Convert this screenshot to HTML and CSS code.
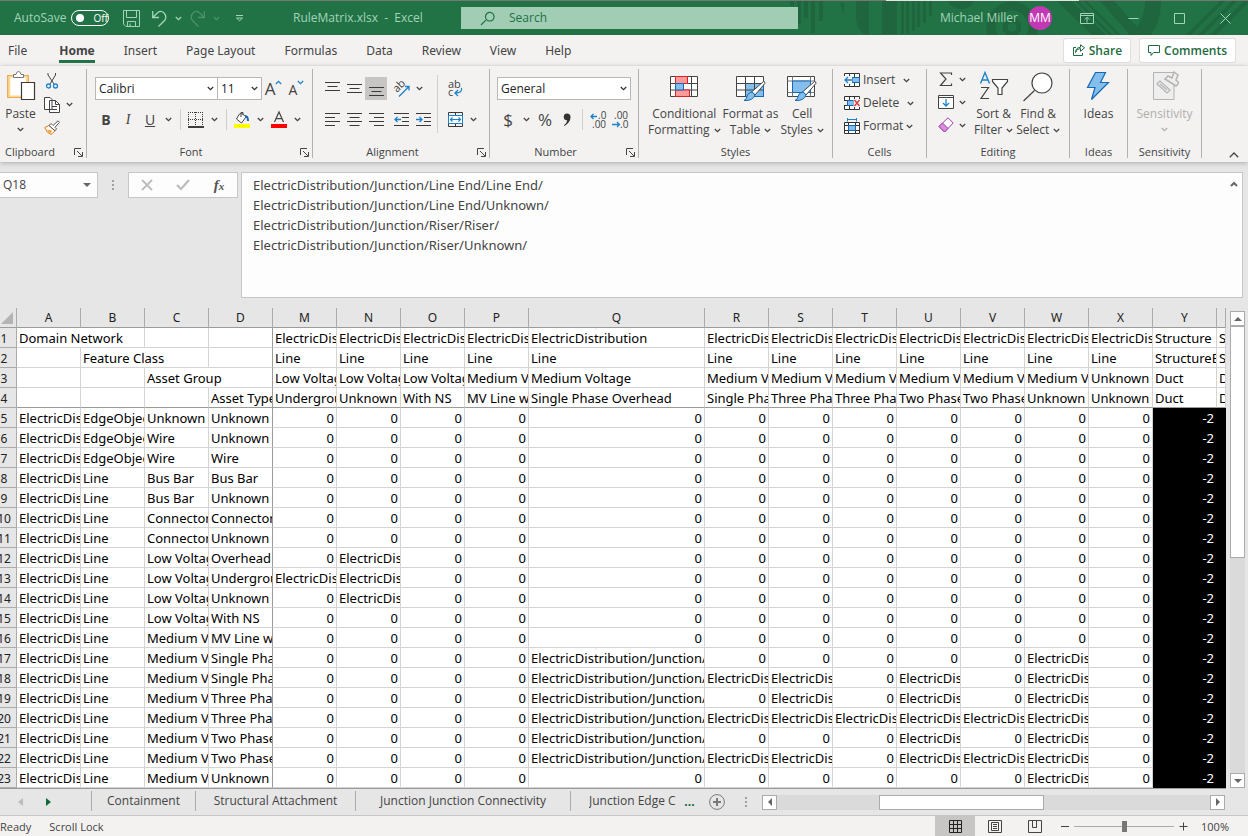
FILE: index.html
```html
<!DOCTYPE html>
<html lang="en">
<head>
<meta charset="utf-8">
<title>RuleMatrix.xlsx - Excel</title>
<link rel="stylesheet" href="styles.css">
<script src="grid.js" defer></script>
</head>
<body>
<svg class="defs" aria-hidden="true">
  <symbol id="chev" viewBox="0 0 7 5"><path d="M.8 1 3.500 3.600 6.200 1" fill="none" stroke="currentColor" stroke-width="1.300"/></symbol>
  <symbol id="launch" viewBox="0 0 9 9"><path d="M.5 7V.5H7M3 3l5 5M8.500 4v4.500H4" fill="none" stroke="currentColor"/></symbol>
</svg>

<header class="titlebar">
  <svg class="art" width="458" height="35" viewBox="790 0 458 35" aria-hidden="true">
    <g fill="#1f653e">
      <path d="M790 1h4v5h-4zM797 1h4v23h-4zM804 1h4v17h-4zM811 1h4v32h-4zM819 1h4v20h-4z"/>
      <path d="M840 3h4v12zM856 1h13v33h-5q-8-6-8-18zM882 1h15v33h-15zM901 1h3v33h-3zM906 1h3v33h-3zM912 1h3v30h-3zM917 1h3v26h-3zM923 1h3v22h-3zM929 1h3v15h-3zM948 1h26q-3 8-13 8t-13-8zM1057 1h14l35 34h-14zM1075 1h4l34 34h-4zM1083 1h4l34 34h-4zM1100 1h14l30 34h-14zM1145 1h16q0 20-10 34h-24q18-10 18-34zM1186 35l34-34h5l-34 34zM1198 35l34-34h5l-34 34zM1210 35l34-34h4v2l-32 32z"/>
    </g>
    <g fill="none" stroke="#1f653e"><circle cx="1012" cy="27" r="21" stroke-width="9"/><circle cx="1012" cy="27" r="7" stroke-width="5"/></g>
    <path d="M790 0h458v1H790z" fill="#767876"/><path d="M886 0h193v1H886z" fill="#e4e4e4"/>
  </svg>
  <div class="quick">
    <label class="autosave">AutoSave <input type="checkbox" class="switch"><span class="knob">Off</span></label>
    <button class="tb save" aria-label="Save"><svg width="17" height="17" viewBox="0 0 17 17"><path d="M.5.5h16v16H3L.5 14zM3.500.500v7h10v-7M4.500 16.500v-5h8v5M7 16.500v-3" /></svg></button>
    <button class="tb undo" aria-label="Undo"><svg width="15" height="17" viewBox="0 0 15 17"><path d="M.7 1v6.500H7M1 7.200 5.500 2.700Q9 0 12 3t1 7L6.500 16.500"/></svg></button>
    <button class="tb chevron" aria-label="Undo list"><svg width="7" height="5"><use href="#chev"/></svg></button>
    <button class="tb redo dim" aria-label="Redo"><svg width="15" height="17" viewBox="0 0 15 17"><path d="M14.300 1v6.500H8M14 7.200 9.500 2.700Q6 0 3 3t-1 7L8.500 16.500"/></svg></button>
    <button class="tb chevron dim" aria-label="Redo list"><svg width="7" height="5"><use href="#chev"/></svg></button>
    <button class="tb custom" aria-label="Customize toolbar"><svg width="9" height="7" viewBox="0 0 9 7"><path d="M1 .5h7M1.500 3 4.500 5.800 7.500 3z"/></svg></button>
  </div>
  <div class="doc">RuleMatrix.xlsx&nbsp; -&nbsp; Excel</div>
  <label class="search">
    <svg width="15" height="15" viewBox="0 0 15 15"><path d="M5.800 9.200 1 14M5.500 5.500a4.300 4.300 0 1 1 4 4.500 4.300 4.300 0 0 1-4-4.500z"/></svg>
    <input type="search" placeholder="Search" aria-label="Search">
  </label>
  <div class="account"><span>Michael Miller</span><button class="avatar">MM</button></div>
  <div class="window">
    <button class="tb" aria-label="Ribbon display options"><svg width="14" height="11" viewBox="0 0 14 11"><path d="M.5.5h13v10H.5zM.5 2.500h13M7 9.500v-5M4.800 6.500 7 4.300l2.200 2.200"/></svg></button>
    <button class="tb" aria-label="Minimize"><svg width="11" height="11" viewBox="0 0 11 11"><path d="M.5 5.500h10"/></svg></button>
    <button class="tb" aria-label="Maximize"><svg width="11" height="11" viewBox="0 0 11 11"><path d="M.5.5h10v10H.5z"/></svg></button>
    <button class="tb" aria-label="Close"><svg width="11" height="11" viewBox="0 0 11 11"><path d="m.5.5 10 10m0-10-10 10"/></svg></button>
  </div>
</header>

<nav class="tabs">
  <a href="#">File</a><a href="#" class="active">Home</a><a href="#">Insert</a><a href="#">Page Layout</a><a href="#">Formulas</a><a href="#">Data</a><a href="#">Review</a><a href="#">View</a><a href="#">Help</a>
  <div class="actions">
    <button><svg width="13" height="13" viewBox="0 0 13 13"><path d="M4 3.500H1.500v8h9V9M3.500 8.500q1-4 5-4v2.800l4-3.600L8.500.800v2.400q-5 .5-5 5.300z"/></svg>Share</button>
    <button><svg width="12" height="12" viewBox="0 0 12 12"><path d="M.5.5h11v7H5.500L3 10.500v-3H.5z"/></svg>Comments</button>
  </div>
</nav>

<main class="ribbon">
  <section class="group clipboard">
    <div class="body">
      <button class="big">
        <svg width="30" height="32" viewBox="0 0 30 32"><path d="M2 5.500h20v22H2z" fill="#fff" stroke="#e07c1a" stroke-width="1.200"/><path d="M3.300 6.500h17.500v20H3.300z" fill="none" stroke="#fbd98f" stroke-width="2"/><path d="M7.500 7.500v-3H10q.5-3 2.500-3t2.500 3h2.500v3z" fill="#fff" stroke="#777"/><path d="M15.500 12.500h13v17h-13z" fill="#fff" stroke="#3b3a39" stroke-width="1.200"/></svg>
        <span>Paste</span><svg class="c" width="7" height="5"><use href="#chev"/></svg>
      </button>
      <div class="stack">
        <button aria-label="Cut"><svg width="16" height="16" viewBox="0 0 16 16" fill="none"><path d="M4 0v2l6 9M11.500 0v2L6 11" stroke="#444"/><circle cx="4.500" cy="13" r="2" stroke="#1e82c8" stroke-width="1.300"/><circle cx="11.500" cy="13" r="2" stroke="#1e82c8" stroke-width="1.300"/></svg></button>
        <button aria-label="Copy"><svg width="16" height="17" viewBox="0 0 16 17" fill="#fff" stroke="#444"><path d="M.5 1.500H6L8 3.500v10H.5zM5.500 4.500h6l4 4v8h-10z"/><path d="M11.500 4.500v4h4M8 10.500h5M8 13.500h5" fill="none"/></svg><svg class="c" width="7" height="5"><use href="#chev"/></svg></button>
        <button aria-label="Format Painter"><svg width="16" height="15" viewBox="0 0 16 15"><path d="M.7 7.500 5 5.500l6 5.500-4 3.500q-4-1-6.300-7z" fill="#fff" stroke="#e07c1a"/><path d="M3 9.500l5 1-1.500 3.500Q4 13 3 9.500z" fill="#f5a64b"/><path d="m5 5.500 2-2 2 2L14 .8l1.500 1.500-4.500 5 1.500 1.500-1.500 2z" fill="#fff" stroke="#555"/></svg></button>
      </div>
    </div>
    <h2>Clipboard<button class="launch" aria-label="Clipboard settings"><svg width="9" height="9"><use href="#launch"/></svg></button></h2>
  </section>

  <section class="group font">
    <div class="body rows">
      <div class="row">
        <select aria-label="Font"><option>Calibri</option></select><select class="size" aria-label="Font size"><option>11</option></select>
        <button class="grow" aria-label="Increase font size"><span class="a1">A</span><svg width="7" height="5" viewBox="0 0 7 5"><path d="M.8 4 3.500 1.300 6.200 4" fill="none" stroke="#1e82c8" stroke-width="1.300"/></svg></button>
        <button class="shrink" aria-label="Decrease font size"><span class="a2">A</span><svg class="blue" width="7" height="5"><use href="#chev"/></svg></button>
      </div>
      <div class="row">
        <button class="b"><b>B</b></button><button class="b"><i>I</i></button><button class="b"><u>U</u></button><button class="cv" aria-label="Underline options"><svg width="7" height="5"><use href="#chev"/></svg></button>
        <span class="bar"></span>
        <button class="b" aria-label="Borders"><svg width="16" height="16" viewBox="0 0 16 16" fill="none" stroke="#333"><path d="M0 .5h16M0 7.500h16M.5 0v14M7.500 0v14M14.500 0v14" stroke-dasharray="1 1"/><path d="M0 15h16" stroke="#000" stroke-width="1.500"/></svg></button><button class="cv" aria-label="Border options"><svg width="7" height="5"><use href="#chev"/></svg></button>
        <span class="bar"></span>
        <button class="b" aria-label="Fill color"><svg width="16" height="17" viewBox="0 0 16 17"><path d="M5 3.500 2.500 8l5 4 4.500-6-4.500-4zM7 6V1.500h2V4" fill="#fff" stroke="#444"/><path d="M11 5q3 0 3 5" fill="none" stroke="#1569b3" stroke-width="2"/><path d="M0 13h16v4H0z" fill="#ff0" stroke="none"/></svg></button><button class="cv" aria-label="Fill options"><svg width="7" height="5"><use href="#chev"/></svg></button>
        <button class="b" aria-label="Font color"><svg width="16" height="17" viewBox="0 0 16 17"><path d="M3.500 11 8 1l4.500 10M5 7.700h6" fill="none" stroke="#444" stroke-width="1.200"/><path d="M0 13h16v4H0z" fill="red" stroke="none"/></svg></button><button class="cv" aria-label="Font color options"><svg width="7" height="5"><use href="#chev"/></svg></button>
      </div>
    </div>
    <h2>Font<button class="launch" aria-label="Font settings"><svg width="9" height="9"><use href="#launch"/></svg></button></h2>
  </section>

  <section class="group align">
    <div class="body">
      <div class="rows">
        <div class="row">
          <button class="b" aria-label="Top align"><svg width="15" height="15" viewBox="0 0 15 15"><path d="M0 1.500h15M2.500 5.500h10M0 9.500h15"/></svg></button><button class="b" aria-label="Middle align"><svg width="15" height="15" viewBox="0 0 15 15"><path d="M0 3.500h15M2.500 7.500h10M0 11.500h15"/></svg></button><button class="b on" aria-label="Bottom align"><svg width="15" height="15" viewBox="0 0 15 15"><path d="M0 6.500h15M2.500 10.500h10M0 14.500h15"/></svg></button>
          <button class="b orient" aria-label="Orientation"><svg width="17" height="16" viewBox="0 0 17 16"><text transform="translate(4 12) rotate(-45)" font-size="11" fill="#444">ab</text><path d="M6 15.500 16 5.500M12 5.500h4v4" stroke="#1e82c8" stroke-width="1.300"/></svg></button><button class="cv" aria-label="Orientation options"><svg width="7" height="5"><use href="#chev"/></svg></button>
        </div>
        <div class="row">
          <button class="b" aria-label="Align left"><svg width="15" height="14" viewBox="0 0 15 14"><path d="M0 .5h15M0 4.500h10M0 8.500h15M0 12.500h10"/></svg></button><button class="b" aria-label="Center"><svg width="15" height="14" viewBox="0 0 15 14"><path d="M0 .5h15M2.500 4.500h10M0 8.500h15M2.500 12.500h10"/></svg></button><button class="b" aria-label="Align right"><svg width="15" height="14" viewBox="0 0 15 14"><path d="M0 .5h15M5 4.500h10M0 8.500h15M5 12.500h10"/></svg></button>
          <button class="b out" aria-label="Decrease indent"><svg width="15" height="14" viewBox="0 0 15 14"><path d="M0 .5h15M8 4.500h7M8 8.500h7M0 12.500h15"/><path d="M7 6.500H1M3.500 4 1 6.500 3.500 9" stroke="#1e82c8" stroke-width="1.300"/></svg></button><button class="b" aria-label="Increase indent"><svg width="15" height="14" viewBox="0 0 15 14"><path d="M0 .5h15M8 4.500h7M8 8.500h7M0 12.500h15"/><path d="M0 6.500h6M3.500 4 6 6.500 3.500 9" stroke="#1e82c8" stroke-width="1.300"/></svg></button>
        </div>
      </div>
      <span class="bar tall"></span>
      <div class="rows">
        <div class="row"><button class="b" aria-label="Wrap text"><svg width="15" height="18" viewBox="0 0 15 18"><text x="0" y="8" font-size="11" fill="#444">ab</text><text x="0" y="16" font-size="11" fill="#444">c</text><path d="M13.500 8q1 5-6 5M10 10l-3 3 3 3" stroke="#1e82c8" stroke-width="1.300"/></svg></button></div>
        <div class="row"><button class="b" aria-label="Merge"><svg width="15" height="15" viewBox="0 0 15 15"><path d="M.5.5h14v14H.5zM7.500 0v4M7.500 11v4M0 3.500h15M0 11.500h15" /><path d="M.5 3.500h14v8H.5z" fill="#fff" stroke="#1e82c8"/><path d="M2.500 7.500h10M4.500 5.500l-2 2 2 2M10.500 5.500l2 2-2 2" stroke="#1e82c8" stroke-width="1.200"/></svg></button><button class="cv" aria-label="Merge options"><svg width="7" height="5"><use href="#chev"/></svg></button></div>
      </div>
    </div>
    <h2>Alignment<button class="launch" aria-label="Alignment settings"><svg width="9" height="9"><use href="#launch"/></svg></button></h2>
  </section>

  <section class="group number">
    <div class="body rows">
      <div class="row"><select aria-label="Number format"><option>General</option></select></div>
      <div class="row">
        <button class="b money">$</button><button class="cv" aria-label="Currency options"><svg width="7" height="5"><use href="#chev"/></svg></button><button class="b money">%</button><button class="b" aria-label="Comma style"><svg width="8" height="14" viewBox="0 0 8 14"><path class="solid" d="M4 .5a3.300 3.300 0 0 1 3.500 3.700Q7.500 9 1.500 13L1 12.300Q4 10 4.200 7.200A3.300 3.300 0 1 1 4 .5z" fill="#333" stroke="none"/></svg></button>
        <span class="bar"></span>
        <button class="b" aria-label="Increase decimal"><svg width="16" height="16" viewBox="0 0 16 16"><text x="8" y="7" font-size="10" fill="#444">.0</text><text x="2" y="16" font-size="10" fill="#444">.00</text><path d="M7 4.500H1M3.500 2 1 4.500 3.500 7" stroke="#1e82c8" stroke-width="1.300"/></svg></button><button class="b" aria-label="Decrease decimal"><svg width="16" height="16" viewBox="0 0 16 16"><text x="2" y="7" font-size="10" fill="#444">.00</text><text x="8" y="16" font-size="10" fill="#444">.0</text><path d="M0 12.500h7M5 10l2.500 2.500L5 15" stroke="#1e82c8" stroke-width="1.300"/></svg></button>
      </div>
    </div>
    <h2>Number<button class="launch" aria-label="Number settings"><svg width="9" height="9"><use href="#launch"/></svg></button></h2>
  </section>

  <section class="group styles">
    <div class="body">
      <button class="big"><svg width="28" height="32" viewBox="0 0 28 32"><path d="M.5 6.500h27v20H.5z" fill="#fff" stroke="#444"/><path d="M5.500 6.500v20M21.500 6.500v20M.5 13.500h27M.5 20h27" stroke="#444"/><path d="M5.500 6.500h12v7h-12zM5.500 20h14v6.500h-14z" fill="#ff9a9a" stroke="#d22"/><path d="M5.500 13.500h8V20h-8z" fill="#83beec" stroke="#1569b3"/></svg><span>Conditional</span><span>Formatting <svg width="7" height="5"><use href="#chev"/></svg></span></button>
      <button class="big"><svg width="30" height="32" viewBox="0 0 30 32"><path d="M.5 6.500h27v20H.5z" fill="#fff" stroke="#444"/><path d="M9.500 13.500h18v13h-18z" fill="#83beec" stroke="#1569b3"/><path d="M9.500 6.500v20M18.500 6.500v20M.5 13.500h27M.5 20h27" stroke="#444"/><path d="M27.500 11.500q2 0 1.300 2L19 25l-3.500-3z" fill="#fff" stroke="#444"/><path d="M15 22q3 .5 4 3-2 6-11 5.500 3-1.500 3-4t4-4.500z" fill="#83beec" stroke="#1569b3"/></svg><span>Format as</span><span>Table <svg width="7" height="5"><use href="#chev"/></svg></span></button>
      <button class="big"><svg width="30" height="32" viewBox="0 0 30 32"><path d="M.5 6.500h27v20H.5z" fill="#fff" stroke="#444"/><path d="M5.500 6.500v20M23.500 6.500v20M.5 11h27M.5 22.500h27" stroke="#777"/><path d="M5.500 11h18v11.500h-18z" fill="#83beec" stroke="#1569b3"/><path d="M27.500 11.500q2 0 1.300 2L19 25l-3.500-3z" fill="#fff" stroke="#444"/><path d="M15 22q3 .5 4 3-2 6-11 5.500 3-1.500 3-4t4-4.500z" fill="#83beec" stroke="#1569b3"/></svg><span>Cell</span><span>Styles <svg width="7" height="5"><use href="#chev"/></svg></span></button>
    </div>
    <h2>Styles</h2>
  </section>

  <section class="group cells">
    <div class="body list">
      <button><svg width="16" height="15" viewBox="0 0 16 15"><path d="M.5.5h15v13H.5zM5.500.500v13M10.500.500v13M0 4.500h16M0 9.500h16" fill="#fff" stroke="#333"/><path d="M8 4.500h7.500v5H8z" fill="#83beec" stroke="#1569b3"/><path d="M0 3h8v8H0z" fill="#f3f2f1"/><path d="M8 7H1M4 4 1 7l3 3" fill="none" stroke="#1e82c8" stroke-width="1.300"/></svg><span>Insert</span><svg class="far" width="7" height="5"><use href="#chev"/></svg></button>
      <button><svg width="16" height="15" viewBox="0 0 16 15"><path d="M.5.500h15v13H.5zM5.500.500v13M10.500.500v13M0 4.500h16M0 9.500h16" fill="#fff" stroke="#333"/><path d="M3.500 4.500h6v5h-6z" fill="#83beec" stroke="#1569b3"/><path d="M9.500 3H16v8H9.500zM0 5h3v4H0z" fill="#f3f2f1"/><path d="m10.500 4 5 6m0-6-5 6" stroke="#e03a3e" stroke-width="1.400"/></svg><span>Delete</span><svg class="far" width="7" height="5"><use href="#chev"/></svg></button>
      <button><svg width="16" height="16" viewBox="0 0 16 16"><path d="M.5 4.500h15v11H.5zM4.500 4.500v11M11.500 4.500v11M0 7.500h16M0 12.500h16" fill="#fff" stroke="#333"/><path d="M4.500 7.500h7v5h-7z" fill="#83beec" stroke="#1569b3"/><path d="M3.500 0v3.500M12.500 0v3.500M3.500 1.500h9" fill="none" stroke="#1e82c8"/></svg><span>Format</span><svg width="7" height="5"><use href="#chev"/></svg></button>
    </div>
    <h2>Cells</h2>
  </section>

  <section class="group editing">
    <div class="body">
      <div class="list">
        <button aria-label="AutoSum"><svg width="16" height="15" viewBox="0 0 16 15"><path d="M13.500 3V1H2.500l5.500 6-5.500 6.500h11v-2" fill="none" stroke="#444" stroke-width="1.200"/></svg><svg width="7" height="5"><use href="#chev"/></svg></button>
        <button aria-label="Fill"><svg width="16" height="14" viewBox="0 0 16 14"><path d="M.5.500h15v13H.5zM.5 2.500h15" fill="#fff" stroke="#444"/><path d="M8 4v7M5 8l3 3 3-3" fill="none" stroke="#1e82c8" stroke-width="1.300"/></svg><svg width="7" height="5"><use href="#chev"/></svg></button>
        <button aria-label="Clear"><svg width="16" height="16" viewBox="0 0 16 16"><path d="M10 .8 15.200 6 6.500 15 1 9.500z" fill="#fff" stroke="#a33bb0"/><path d="m4.500 6 5.500 5.500L6.500 15 1 9.500z" fill="#d68fd8" stroke="#a33bb0"/></svg><svg width="7" height="5"><use href="#chev"/></svg></button>
      </div>
      <button class="big"><svg width="30" height="32" viewBox="0 0 30 32" fill="none"><path d="M1.500 13.500 6 2.500l4.500 11M3 10h6" stroke="#1e82c8" stroke-width="1.400"/><path d="M2 17.500h7.500L2 28.500h8" stroke="#444" stroke-width="1.200"/><path d="M13.500 9.500h15v2L23 18v6.500h-4V18l-5.500-6.500z" fill="#fff" stroke="#444" stroke-width="1.200"/></svg><span>Sort &amp;</span><span>Filter <svg width="7" height="5"><use href="#chev"/></svg></span></button>
      <button class="big"><svg width="30" height="32" viewBox="0 0 30 32"><circle cx="19" cy="13" r="10" fill="#fff" stroke="#444" stroke-width="1.200"/><path d="M11.500 20.500.5 31" stroke="#444" stroke-width="1.200"/></svg><span>Find &amp;</span><span>Select <svg width="7" height="5"><use href="#chev"/></svg></span></button>
    </div>
    <h2>Editing</h2>
  </section>

  <section class="group ideas">
    <div class="body"><button class="big"><svg width="24" height="32" viewBox="0 0 24 32"><path d="M9.500 2.500h10l-5 10h8L5.500 29.500l3.500-12H1.500z" fill="#83beec" stroke="#1569b3" stroke-width="1.200"/></svg><span>Ideas</span></button></div>
    <h2>Ideas</h2>
  </section>

  <section class="group sens">
    <div class="body"><button class="big" disabled><svg width="30" height="32" viewBox="0 0 30 32" fill="#eee" stroke="#b5b3b1"><path d="M4.500 2.500H25v27H4.500z"/><path d="m8 14 3-3 10 9-3 3zM11 14l7 6" stroke-width="1.200"/><path d="m16 9 3-3 4 2 2-6 4 3-2 5 3 3-3 3z" stroke-width="1.500"/></svg><span>Sensitivity</span><svg class="c" width="7" height="5"><use href="#chev"/></svg></button></div>
    <h2>Sensitivity</h2>
  </section>
  <button class="collapse" aria-label="Collapse ribbon"><svg width="10" height="6" viewBox="0 0 10 6"><path d="M.8 5.200 5 1l4.200 4.200" fill="none" stroke="#444" stroke-width="1.300"/></svg></button>
</main>

<section class="formula">
  <div class="namebox"><input value="Q18" aria-label="Name box"><button aria-label="Names"><svg width="8" height="4" viewBox="0 0 8 4"><path d="M0 0h8L4 4z" fill="#666"/></svg></button></div>
  <span class="dots"></span>
  <div class="fx">
    <button aria-label="Cancel"><svg width="12" height="12" viewBox="0 0 12 12"><path d="m1 1 10 10M11 1 1 11" stroke="#bcbcbc" stroke-width="1.800"/></svg></button>
    <button aria-label="Enter"><svg width="14" height="12" viewBox="0 0 14 12"><path d="m1 6 4 4 8-9" fill="none" stroke="#bcbcbc" stroke-width="2.200"/></svg></button>
    <button class="fn" aria-label="Insert function"><i>f<small>x</small></i></button>
  </div>
  <div class="entry">
    <textarea aria-label="Formula" spellcheck="false">ElectricDistribution/Junction/Line End/Line End/
ElectricDistribution/Junction/Line End/Unknown/
ElectricDistribution/Junction/Riser/Riser/
ElectricDistribution/Junction/Riser/Unknown/</textarea>
    <button aria-label="Collapse formula bar"><svg width="8" height="6" viewBox="0 0 8 6"><path d="M1 5 4 2l3 3" fill="none" stroke="#666" stroke-width="2"/></svg></button>
  </div>
</section>

<section class="sheet">
  <div class="cellsbox"><table id="grid"></table></div>
  <div class="vscroll">
    <button aria-label="Scroll up"><svg width="8" height="4" viewBox="0 0 8 4"><path d="M0 4h8L4 0z"/></svg></button>
    <div class="track"><div class="thumb"></div></div>
    <button aria-label="Scroll down"><svg width="8" height="4" viewBox="0 0 8 4"><path d="M0 0h8L4 4z"/></svg></button>
  </div>
</section>

<nav class="sheets">
  <div class="arrows"><button aria-label="Previous sheet"><svg width="5" height="8" viewBox="0 0 5 8"><path d="M5 0v8L0 4z" fill="#bbb"/></svg></button><button aria-label="Next sheet"><svg width="5" height="8" viewBox="0 0 5 8"><path d="M0 0v8l5-4z" fill="#0e6a37"/></svg></button></div>
  <button class="tab t1">Containment</button><button class="tab t2">Structural Attachment</button><button class="tab t3">Junction Junction Connectivity</button><button class="tab t4"><span>Junction Edge Connectivity</span></button>
  <button class="more">...</button>
  <button class="add" aria-label="New sheet"><svg width="16" height="16" viewBox="0 0 16 16"><circle cx="8" cy="8" r="7.400" fill="none" stroke="#7a7a7a"/><path d="M8 4v8M4 8h8" stroke="#7a7a7a" stroke-width="2"/></svg></button>
  <span class="dots"></span>
  <div class="hscroll">
    <button aria-label="Scroll left"><svg width="4" height="8" viewBox="0 0 4 8"><path d="M4 0v8L0 4z"/></svg></button>
    <div class="track"><div class="thumb"></div></div>
    <button aria-label="Scroll right"><svg width="4" height="8" viewBox="0 0 4 8"><path d="M0 0v8l4-4z"/></svg></button>
  </div>
</nav>

<footer class="status">
  <span>Ready</span><span>Scroll Lock</span>
  <div class="views">
    <button class="on" aria-label="Normal"><svg width="13" height="13" viewBox="0 0 13 13"><path d="M.5.500h12v12H.5zM4.500.500v12M8.500.500v12M.5 4.500h12M.5 8.500h12" stroke="#222"/></svg></button>
    <button aria-label="Page layout"><svg width="14" height="13" viewBox="0 0 14 13"><path d="M.5.500h13v12H.5zM3.500 2.500h7v8h-7zM5 4.500h4M5 6.500h4M5 8.500h4"/></svg></button>
    <button aria-label="Page break preview"><svg width="14" height="13" viewBox="0 0 14 13"><path d="M.5.500h13v12H.5zM4.500.500v7h4v-7M8.500 7.500H5"/></svg></button>
  </div>
  <div class="zoom">
    <button aria-label="Zoom out"><svg width="9" height="9" viewBox="0 0 9 9"><path d="M1 4.500h8"/></svg></button>
    <input type="range" aria-label="Zoom" value="50">
    <button aria-label="Zoom in"><svg width="9" height="9" viewBox="0 0 9 9"><path d="M.5 4.500h8M4.500.500v8"/></svg></button>
  </div>
  <button class="pct">100%</button>
</footer>
</body>
</html>
```
FILE: styles.css
```css
* { box-sizing: border-box; }
body { margin: 0; min-height: 100vh; display: flex; flex-direction: column; background: #e6e6e6; color: #444; font: 12px/16px "Open Sans", "Noto Sans", sans-serif; overflow-x: hidden; }
button, input, select, textarea { font: inherit; color: inherit; margin: 0; padding: 0; border: 0; background: none; border-radius: 0; outline: 0; }
button { display: flex; align-items: center; justify-content: center; flex: none; white-space: nowrap; }
svg { flex: none; display: block; }
a { color: inherit; text-decoration: none; }
.defs { position: absolute; width: 0; height: 0; }

.titlebar { position: relative; display: flex; align-items: center; height: 35px; border-top: 1px solid #767876; background: #217346; color: #a3d3b8; flex: none; }
.titlebar > * { position: relative; }
.titlebar .art { position: absolute; right: 0; top: -1px; }
.quick { display: flex; align-items: center; width: 260px; padding-left: 14px; }
.autosave { display: flex; align-items: center; gap: 5px; width: 96px; }
.switch { position: absolute; opacity: 0; }
.knob { display: flex; align-items: center; gap: 9px; width: 38px; height: 16px; padding-left: 4px; border: 1px solid #fff; border-radius: 8px; color: #fff; font-size: 10px; }
.knob::before { content: ""; width: 8px; height: 8px; border-radius: 4px; background: #fff; }
.tb { height: 34px; }
.tb svg { fill: none; stroke: currentColor; stroke-width: 1; }
.tb.save { width: 42px; }
.tb.undo, .tb.redo { width: 15px; }
.tb.undo svg, .tb.redo svg { stroke-width: 1.300; }
.tb.chevron { width: 23px; }
.tb.dim { color: #4d9169; }
.tb.custom { width: 22px; }
.doc { width: 201px; padding-left: 33px; white-space: nowrap; }
.search { display: flex; align-items: center; gap: 14px; flex: 0 1 337px; min-width: 80px; height: 22px; padding-left: 19px; background: #a0cdb4; color: #217346; }
.search svg { fill: none; stroke: #217346; stroke-width: 1.200; }
.search input { flex: 1; min-width: 0; }
.search input::placeholder { color: #217346; }
.account { display: flex; align-items: center; gap: 10px; margin-left: auto; white-space: nowrap; }
.avatar { width: 24px; height: 24px; border-radius: 12px; background: #c239b3; color: #fff; }
.window { display: flex; margin-left: 12px; }
.window .tb { width: 46px; }

.tabs { display: flex; align-items: center; height: 31px; flex: none; padding: 0 13px 0 8px; background: #f3f2f1; }
.tabs > a { position: relative; height: 31px; margin-right: 29px; line-height: 31px; white-space: nowrap; font-family: "Noto Sans", sans-serif; }
.tabs > a:first-child { margin-right: 32px; }
.tabs .active { font-weight: bold; }
.tabs .active::after { content: ""; position: absolute; left: 0; right: 0; bottom: 3px; height: 3px; background: #217346; }
.actions { display: flex; gap: 10px; margin-left: auto; }
.actions button { height: 23px; gap: 4px; padding: 0 8px; border-radius: 2px; background: #fff; box-shadow: 0 0 0 1px #e0dfde; color: #1e6b41; font-weight: 600; }
.actions svg { fill: none; stroke: currentColor; }

.ribbon { display: flex; height: 96px; flex: none; padding-top: 3px; background: #f3f2f1; box-shadow: 0 1px 5px #aaa; position: relative; }
.group { display: flex; flex-direction: column; height: 89px; border-right: 1px solid #b3b2b1; flex: none; }
.body { display: flex; flex: 1; }
.group h2 { display: flex; justify-content: center; align-items: center; position: relative; margin: 0; height: 12px; font: 11px/12px "Open Sans", sans-serif; }
.launch { position: absolute; right: 3px; top: 2px; }
.font h2, .align h2, .number h2 { padding-right: 17px; }
.clipboard h2 { padding-right: 26px; }
.big { flex-direction: column; justify-content: flex-start; padding-top: 1px; }
.big > svg:first-child { margin-bottom: 4px; }
.big span { display: flex; align-items: center; gap: 4px; height: 16px; }
.big .c { margin-top: 5px; }
.clipboard { width: 87px; }
.clipboard .body { padding-left: 6px; }
.clipboard .big { width: 29px; }
.stack { display: flex; flex-direction: column; gap: 7px; padding: 4px 0 0 9px; }
.stack button { justify-content: flex-start; gap: 6px; height: 16px; }
.font { width: 226px; }
.rows { display: flex; flex-direction: column; gap: 8px; padding-top: 8px; }
.row { display: flex; align-items: center; height: 23px; }
.font .rows { padding-left: 8px; }
select { height: 23px; width: 123px; padding-left: 3px; border: 1px solid #b8b7b6; color: #222; appearance: none; background: #fff url("data:image/svg+xml,%3Csvg xmlns='http://www.w3.org/2000/svg' width='7' height='5'%3E%3Cpath d='M.8 1 3.500 3.600 6.200 1' fill='none' stroke='%23333' stroke-width='1.300'/%3E%3C/svg%3E") no-repeat right 3px center; }
.size { width: 45px; margin-left: -1px; }
.grow, .shrink { align-items: flex-start; width: 23px; height: 20px; }
.grow svg, .shrink svg { margin-top: 1px; }
.a1 { font-size: 17px; line-height: 20px; }
.a2 { font-size: 14px; line-height: 22px; }
.blue { color: #1e82c8; }
.b { width: 22px; height: 23px; font-size: 14px; }
.b svg { fill: none; stroke: #3b3a39; overflow: visible; }
.b text { stroke: none; }
.b i { font-family: "Liberation Serif", serif; }
.cv { width: 15px; height: 23px; }
.on { background: #c8c6c4; }
.bar { width: 1px; height: 21px; margin: 0 4px; background: #d0cfce; flex: none; }
.align { width: 177px; }
.align .rows { padding-left: 8px; }
.tall { height: 58px; margin: 6px 0 0 3px; }
.align .tall + .rows { padding-left: 6px; }
.orient, .out { margin-left: 3px; }
.number { width: 149px; }
.number .rows { padding-left: 7px; }
.number select { width: 134px; }
.money { font-size: 17px; }
.styles { width: 194px; }
.styles .body { padding-left: 9px; gap: 2px; }
.list { display: flex; flex-direction: column; gap: 7px; padding-top: 2px; }
.list button { height: 16px; gap: 3px; justify-content: flex-start; }
.cells { width: 94px; }
.cells .body { padding: 3px 0 0 11px; }
.far { margin-left: 5px; }
.editing { width: 143px; }
.editing .body { padding-left: 11px; }
.editing .list { width: 36px; }
.editing .list button { gap: 5px; }
.editing .body > .big + .big { margin-left: 3px; }
.ideas { width: 58px; }
.ideas .body, .sens .body { justify-content: center; }
.sens { width: 74px; }
.sens .big { color: #b1afad; }
.collapse { margin: auto 8px 4px auto; width: 12px; }

.formula { display: flex; align-items: flex-start; flex: none; height: 146px; padding: 10px 5px 10px 0; }
.namebox, .fx, .entry { display: flex; background: #fdfdfd; border: 1px solid #c6c6c6; }
.namebox { width: 98px; height: 26px; border-left: 0; }
.namebox input { flex: 1; min-width: 0; padding-left: 3px; }
.namebox button { width: 20px; }
.dots { width: 2px; height: 11px; margin: 8px 14px 0; background: repeating-linear-gradient(#a0a0a0 0 2px, transparent 2px 4px); flex: none; }
.fx { width: 110px; height: 26px; }
.fx button { width: 36px; }
.fx .fn { color: #555; font: bold 15px "Liberation Serif", serif; }
.fn small { font-size: 11px; }
.entry { flex: 1; height: 126px; margin-left: 3px; align-items: flex-start; }
.entry textarea { flex: 1; height: 124px; padding: 2px 0 0 11px; font: 13px/20px "Noto Sans", sans-serif; resize: none; }
.entry button { width: 16px; height: 22px; }

.sheet { display: flex; flex: 1; min-height: 0; }
.cellsbox { flex: 1; min-width: 0; margin-left: -8px; overflow: hidden; border-bottom: 1px solid #9b9b9b; }
table { width: 100%; min-width: 1234px; table-layout: fixed; border-collapse: separate; border-spacing: 0; color: #000; font: 13px/17px "Noto Sans", sans-serif; }
th, td { height: 20px; padding: 2px 2px 0; overflow: hidden; white-space: nowrap; text-align: left; font-weight: normal; border: solid #d4d4d4; border-width: 0 1px 1px 0; }
td { background: #fff; }
th { padding: 2px 0 0; background: #e6e6e6; border-color: #ababab; text-align: center; color: #222; font-size: 12px; }
thead th { padding: 1px 0; border-bottom-color: #9b9b9b; }
.corner svg { margin-left: 9px; }
td.n { text-align: right; }
td.freeze { border-right-color: #9b9b9b; }
tr.frozen td { border-bottom-color: #9b9b9b; }
td.k { background: #000; border-color: #000; color: #fff; }
.ew { width: 25px; }
.cw { width: 64px; }
.qw { width: 176px; }
.vscroll { display: flex; flex-direction: column; width: 15px; margin: 3px 3px 1px 4px; }
.vscroll button, .hscroll button { width: 15px; height: 15px; background: #fff; border: 1px solid #ababab; }
.vscroll button svg, .hscroll button svg { fill: #666; }
.track { flex: 1; background: #dadada; }
.thumb { background: #fff; border: 1px solid #ababab; }
.vscroll .thumb { height: 52%; }

.sheets { display: flex; align-items: center; height: 27px; flex: none; border-bottom: 1px solid #c6c6c6; }
.arrows { display: flex; width: 91px; padding-left: 18px; gap: 23px; }
.tab { height: 20px; margin-bottom: 2px; border-left: 1px solid #ababab; }
.t1 { width: 104px; }
.t2 { width: 160px; }
.t3 { width: 215px; }
.t4 { width: 106px; padding-left: 18px; justify-content: flex-start; }
.t4 span { overflow: hidden; }
.more { width: 27px; color: #0e6a37; font-weight: bold; }
.add { margin-left: 6px; }
.sheets .dots { margin: 0 15px 0 20px; }
.hscroll { display: flex; flex: 1; margin-right: 23px; }
.hscroll .track { padding-left: 22%; }
.hscroll .thumb { width: 50%; height: 15px; }

.status { display: flex; align-items: center; height: 21px; flex: none; gap: 18px; padding-right: 19px; background: #f3f2f1; font-size: 11px; }
.status svg { fill: none; stroke: #444; }
.views { display: flex; margin-left: auto; }
.views button { width: 40px; height: 21px; }
.zoom { display: flex; align-items: center; gap: 5px; margin: 0 -5px 0 -13px; }
.zoom button { width: 9px; }
.zoom input { appearance: none; width: 100px; height: 14px; background: linear-gradient(#aaa, #aaa) center / 100% 1px no-repeat; }
.zoom input::-webkit-slider-thumb { appearance: none; width: 5px; height: 11px; background: #777; }
```
FILE: grid.js
```js
const E = "ElectricDistribution";
const J = "ElectricDistribution/Junction/Line End";
const letters = ["A", "B", "C", "D", "M", "N", "O", "P", "Q", "R", "S", "T", "U", "V", "W", "X", "Y", ""];
const right = letters.slice(4);

// Header rows: [text, colspan] pairs for the frozen columns, then plain values.
const heads = [
  [[["Domain Network", 2], ["", 1], ["", 1]], [...Array(12).fill(E), "Structure", "Structure"]],
  [[["", 1], ["Feature Class", 2], ["", 1]], [...Array(12).fill("Line"), "StructureEdge", "StructureEdge"]],
  [[["", 1], ["", 1], ["Asset Group", 2]], ["Low Voltage", "Low Voltage", "Low Voltage", ...Array(8).fill("Medium Voltage"), "Unknown", "Duct", "Duct"]],
  [[["", 1], ["", 1], ["", 1], ["Asset Type", 1]], ["Underground", "Unknown", "With NS", "MV Line with", "Single Phase Overhead", "Single Phase", "Three Phase", "Three Phase", "Two Phase", "Two Phase", "Unknown", "Unknown", "Duct", "Duct"]]
];

// Frozen columns B-D and the letters of the columns that hold a rule.
const rows = [
  ["EdgeObject", "Unknown", "Unknown", ""], ["EdgeObject", "Wire", "Unknown", ""], ["EdgeObject", "Wire", "Wire", ""],
  ["Line", "Bus Bar", "Bus Bar", ""], ["Line", "Bus Bar", "Unknown", ""],
  ["Line", "Connector", "Connector", ""], ["Line", "Connector", "Unknown", ""],
  ["Line", "Low Voltage", "Overhead", "N"], ["Line", "Low Voltage", "Underground", "MN"],
  ["Line", "Low Voltage", "Unknown", "N"], ["Line", "Low Voltage", "With NS", ""],
  ["Line", "Medium Voltage", "MV Line with", ""], ["Line", "Medium Voltage", "Single Phase", "QW"],
  ["Line", "Medium Voltage", "Single Phase", "QRSUW"], ["Line", "Medium Voltage", "Three Phase", "QSUW"],
  ["Line", "Medium Voltage", "Three Phase", "QRSTUVW"], ["Line", "Medium Voltage", "Two Phase", "QUW"],
  ["Line", "Medium Voltage", "Two Phase", "QRSUVW"], ["Line", "Medium Voltage", "Unknown", "W"]
];

const td = (text, cls = "", span = 1) => `<td class="${cls}" colspan="${span}">${text}</td>`;
let html = '<colgroup><col class="ew">' + letters.map(l => `<col class="${l === "Q" ? "qw" : l ? "cw" : ""}">`).join("") + "</colgroup>";
html += '<thead><tr><th class="corner"><svg width="12" height="12" viewBox="0 0 12 12"><path d="M12 0v12H0z" fill="#b4b4b4"/></svg></th>' +
  letters.map(l => `<th>${l}</th>`).join("") + "</tr></thead><tbody>";
heads.forEach(([left, values], i) => {
  html += `<tr class="${i === 3 ? "frozen" : ""}"><th>${i + 1}</th>` +
    left.map(([t, s], k) => td(t, k === left.length - 1 ? "freeze" : "", s)).join("") +
    values.map(v => td(v)).join("") + "</tr>";
});
rows.forEach(([b, c, d, rules], i) => {
  html += `<tr><th>${i + 5}</th>` + td(E) + td(b) + td(c) + td(d, "freeze") +
    right.map(l => {
      if (l === "Y") return td("-2", "n k");
      if (l === "") return td("", "k");
      return rules.includes(l) ? td(l === "Q" ? J : E) : td("0", "n");
    }).join("") + "</tr>";
});
document.getElementById("grid").innerHTML = html + "</tbody>";
```
